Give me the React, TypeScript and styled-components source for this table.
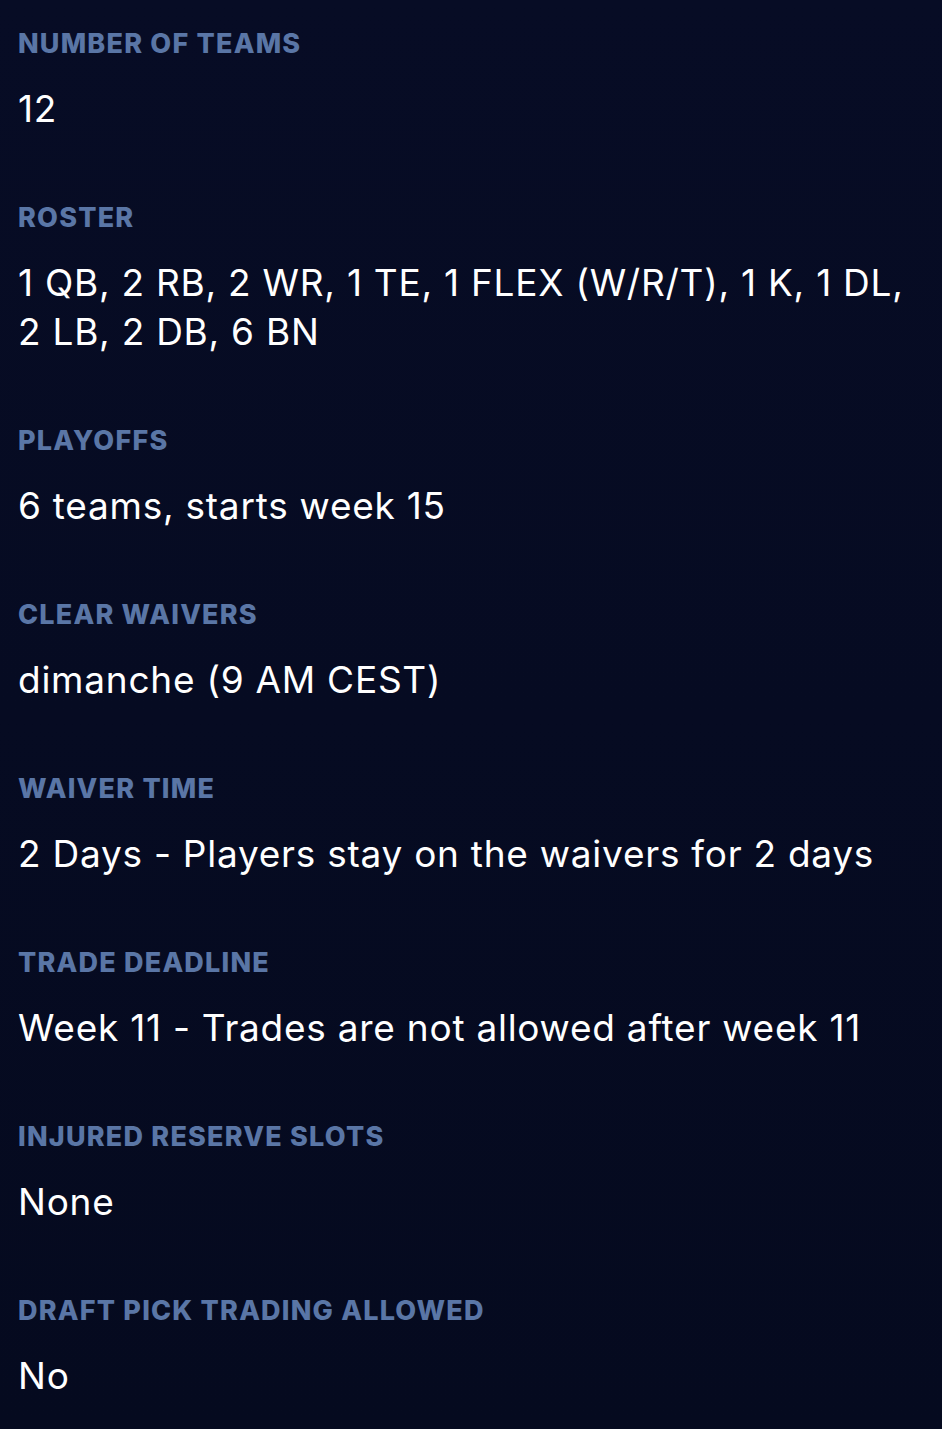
import * as React from 'react';
import styled, { createGlobalStyle } from 'styled-components';

const GlobalStyle = createGlobalStyle`
  html, body {
    margin: 0;
    padding: 0;
    background: #060b22;
  }
  #root {
    min-height: 100vh;
  }
`;

const Page = styled.div`
  min-height: 1429px;
  box-sizing: border-box;
  padding: 24px 18px 0 18px;
  background: linear-gradient(180deg, #070c25 0%, #050a1f 100%);
  display: flex;
  flex-direction: column;
  gap: 65px;
  font-family: Inter, 'Noto Sans', sans-serif;
`;

const Setting = styled.section`
  display: flex;
  flex-direction: column;
  gap: 20px;
`;

const Label = styled.h3`
  margin: 0;
  font-size: 27px;
  line-height: 40px;
  font-weight: 800;
  letter-spacing: 1.2px;
  text-transform: uppercase;
  color: #5a76a6;
`;

const Value = styled.p`
  margin: 0;
  font-size: 37px;
  line-height: 49px;
  font-weight: 400;
  letter-spacing: 0.75px;
  color: #ffffff;
  max-width: 906px;
`;

interface LeagueSetting {
  label: string;
  value: string;
}

const settings: LeagueSetting[] = [
  { label: 'Number of teams', value: '12' },
  { label: 'Roster', value: '1 QB, 2 RB, 2 WR, 1 TE, 1 FLEX (W/R/T), 1 K, 1 DL, 2 LB, 2 DB, 6 BN' },
  { label: 'Playoffs', value: '6 teams, starts week 15' },
  { label: 'Clear waivers', value: 'dimanche (9 AM CEST)' },
  { label: 'Waiver time', value: '2 Days - Players stay on the waivers for 2 days' },
  { label: 'Trade deadline', value: 'Week 11 - Trades are not allowed after week 11' },
  { label: 'Injured reserve slots', value: 'None' },
  { label: 'Draft pick trading allowed', value: 'No' },
];

export default function App() {
  return (
    <>
      <GlobalStyle />
      <Page>
        {settings.map((s) => (
          <Setting key={s.label}>
            <Label>{s.label}</Label>
            <Value>{s.value}</Value>
          </Setting>
        ))}
      </Page>
    </>
  );
}
